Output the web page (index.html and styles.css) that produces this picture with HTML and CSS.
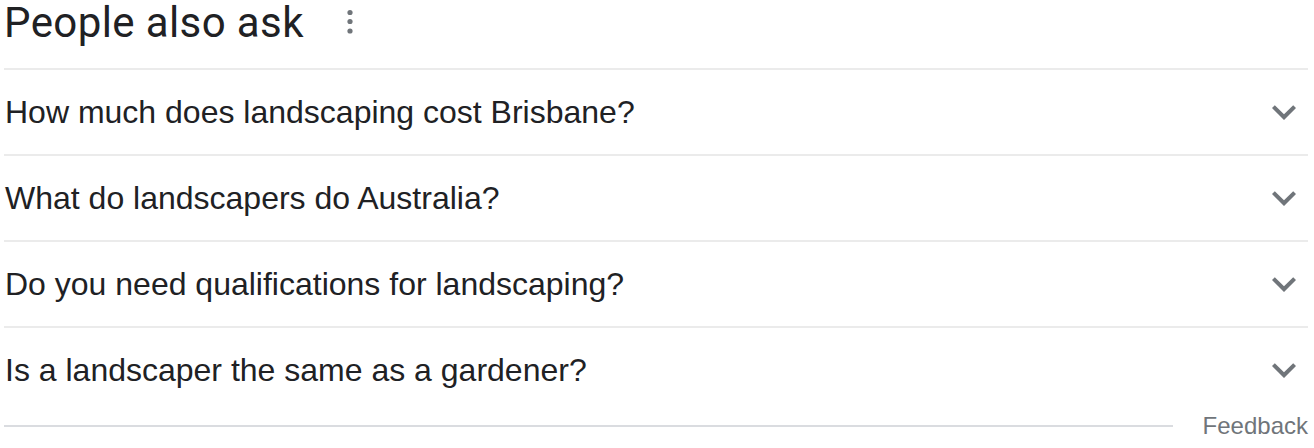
FILE: index.html
```html
<!DOCTYPE html>
<html lang="en">
<head>
    <meta charset="UTF-8">
    <title>People also ask</title>
    <link rel="stylesheet" href="styles.css">
</head>
<body>

    <div class="paa">
        <div class="paa-header">
            <h2>People also ask</h2>
            <svg class="more" width="10" height="28" viewBox="0 0 10 28">
                <circle cx="5" cy="5.5" r="2.6"/>
                <circle cx="5" cy="14.5" r="2.6"/>
                <circle cx="5" cy="24" r="2.6"/>
            </svg>
        </div>

        <div class="question">
            <span>How much does landscaping cost Brisbane?</span>
            <svg class="chevron" width="48" height="48" viewBox="0 0 24 24"><path d="M16.59 8.59L12 13.17 7.41 8.59 6 10l6 6 6-6z"/></svg>
        </div>
        <div class="question">
            <span>What do landscapers do Australia?</span>
            <svg class="chevron" width="48" height="48" viewBox="0 0 24 24"><path d="M16.59 8.59L12 13.17 7.41 8.59 6 10l6 6 6-6z"/></svg>
        </div>
        <div class="question">
            <span>Do you need qualifications for landscaping?</span>
            <svg class="chevron" width="48" height="48" viewBox="0 0 24 24"><path d="M16.59 8.59L12 13.17 7.41 8.59 6 10l6 6 6-6z"/></svg>
        </div>
        <div class="question">
            <span>Is a landscaper the same as a gardener?</span>
            <svg class="chevron" width="48" height="48" viewBox="0 0 24 24"><path d="M16.59 8.59L12 13.17 7.41 8.59 6 10l6 6 6-6z"/></svg>
        </div>

        <div class="paa-footer">
            <div class="rule"></div>
            <span class="feedback">Feedback</span>
        </div>
    </div>

</body>
</html>
```

FILE: styles.css
```css
body {
    margin: 0;
    background-color: #fff;
    font-family: "Liberation Sans", Arial, sans-serif;
    color: #202124;
}

.paa {
    width: 1304px;
    margin-left: 4px;
}

.paa-header {
    height: 68px;
    display: flex;
    align-items: flex-start;
}

h2 {
    margin: 0;
    font-family: Roboto, "Open Sans", sans-serif;
    font-weight: 400;
    font-size: 42px;
    line-height: 46px;
    letter-spacing: 0.4px;
}

.more {
    fill: #70757a;
    margin-left: 41px;
    margin-top: 7px;
}

.question {
    height: 84px;
    border-top: 2px solid #ebebeb;
    display: flex;
    align-items: center;
    justify-content: space-between;
    font-size: 32px;
    padding-left: 1px;
}

.chevron {
    fill: #70757a;
}

.paa-footer {
    height: 28px;
    display: flex;
    align-items: center;
}

.rule {
    width: 1169px;
    height: 2px;
    background-color: #dadce0;
}

.feedback {
    margin-left: auto;
    font-size: 24px;
    color: #70757a;
}
```
